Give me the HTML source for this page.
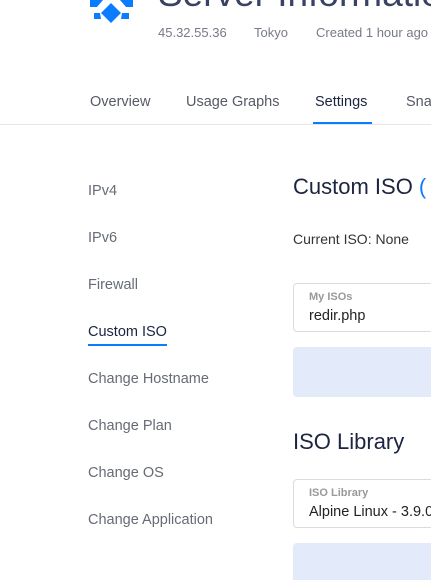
<!DOCTYPE html>
<html><head><meta charset="utf-8"><style>
html,body{margin:0;width:431px;height:580px;overflow:hidden;background:#fff;font-family:"Liberation Sans",sans-serif}
#w{position:relative;width:431px;height:580px;overflow:hidden}
.a{position:absolute;white-space:nowrap}
.t{font-size:37px;color:#3a4262;left:158px;top:-27px}
.s{font-size:13px;color:#767b85;top:25px}
.tab{font-size:14.5px;color:#555a64;top:94px}
.side{font-size:14.5px;color:#666b74;left:88px}
.h{font-size:22px;color:#1b2440;left:293px}
.box{position:absolute;left:293px;width:160px;height:47px;border:1px solid #dcdcdc;border-radius:4px}
.lab{position:absolute;left:15px;top:7px;font-size:11px;font-weight:bold;color:#999}
.val{position:absolute;left:15px;top:24px;font-size:14.5px;color:#222}
.bl{position:absolute;left:293px;width:150px;background:#e3eafa;border-radius:4px}
</style></head><body><div id="w">
<svg class="a" style="left:88px;top:0" width="48" height="26" viewBox="88 0 48 26" fill="#0a7cff">
<polygon points="90,0 103,0 97,7 90,7"/>
<polygon points="120,0 133,0 133,7 126,7"/>
<polygon points="111,3 121,13 111,23 101,13"/>
<polygon points="94,13 100,13 101,19 94,19"/>
<polygon points="122,13 129,13 129,19 121,19"/>
</svg>
<div class="a t">Server Information</div>
<div class="a s" style="left:158px">45.32.55.36</div>
<div class="a s" style="left:254px">Tokyo</div>
<div class="a s" style="left:316px">Created 1 hour ago</div>
<div class="a tab" style="left:90px">Overview</div>
<div class="a tab" style="left:186px">Usage Graphs</div>
<div class="a tab" style="left:315px;color:#1b2440">Settings</div>
<div class="a tab" style="left:406px">Snapshots</div>
<div class="a" style="left:313px;top:122px;width:59px;height:3px;background:#0a7cff"></div>
<div class="a" style="left:0;top:124px;width:431px;height:1px;background:#e6e6e6"></div>
<div class="a side" style="top:183px">IPv4</div>
<div class="a side" style="top:230px">IPv6</div>
<div class="a side" style="top:277px">Firewall</div>
<div class="a side" style="top:324px;color:#1b2440">Custom ISO</div>
<div class="a" style="left:88px;top:344px;width:79px;height:2px;background:#0a7cff"></div>
<div class="a side" style="top:371px">Change Hostname</div>
<div class="a side" style="top:418px">Change Plan</div>
<div class="a side" style="top:465px">Change OS</div>
<div class="a side" style="top:512px">Change Application</div>
<div class="a h" style="top:174px">Custom ISO <span style="color:#0a7cff">(</span></div>
<div class="a" style="left:293px;top:231px;font-size:14px;color:#333">Current ISO: None</div>
<div class="box" style="top:283px"><div class="lab">My ISOs</div><div class="val">redir.php</div></div>
<div class="bl" style="top:347px;height:50px"></div>
<div class="a h" style="top:429px">ISO Library</div>
<div class="box" style="top:479px"><div class="lab">ISO Library</div><div class="val">Alpine Linux - 3.9.0</div></div>
<div class="bl" style="top:543px;height:50px"></div>
</div></body></html>
